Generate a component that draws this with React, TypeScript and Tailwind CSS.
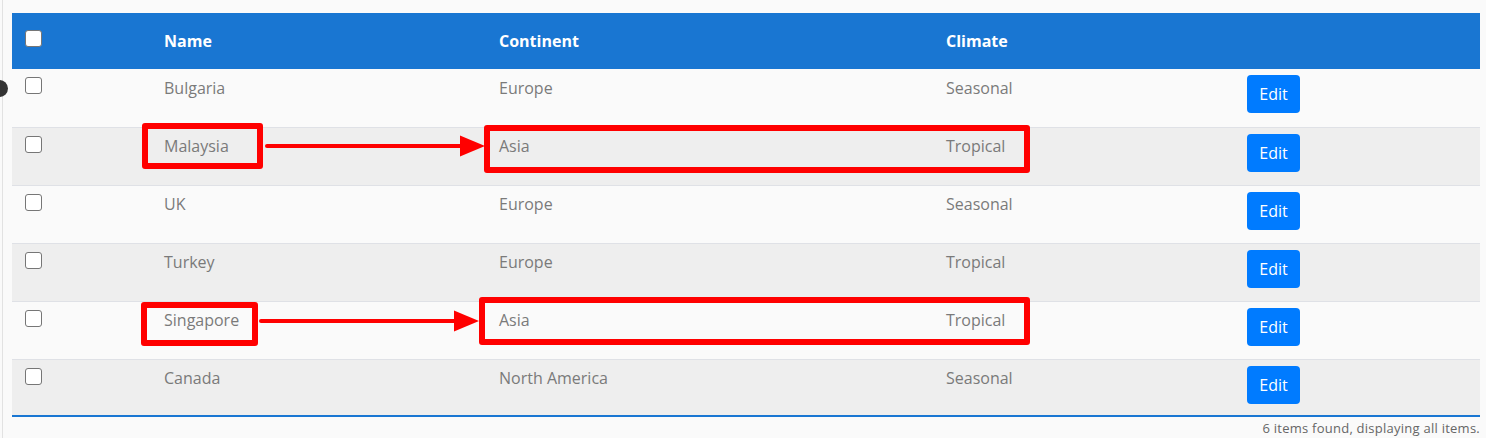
import React from "react";

interface Country {
  name: string;
  continent: string;
  climate: string;
}

const countries: Country[] = [
  { name: "Bulgaria", continent: "Europe", climate: "Seasonal" },
  { name: "Malaysia", continent: "Asia", climate: "Tropical" },
  { name: "UK", continent: "Europe", climate: "Seasonal" },
  { name: "Turkey", continent: "Europe", climate: "Tropical" },
  { name: "Singapore", continent: "Asia", climate: "Tropical" },
  { name: "Canada", continent: "North America", climate: "Seasonal" },
];

const Checkbox = () => (
  <span className="block h-[17px] w-[17px] rounded-[3px] border-[1.5px] border-[#767676] bg-white" />
);

const Arrow = ({ left, top, width }: { left: number; top: number; width: number }) => (
  <svg
    className="absolute"
    style={{ left, top: top - 12 }}
    width={width}
    height={24}
    viewBox={`0 0 ${width} 24`}
  >
    <line x1={2} y1={12} x2={width - 22} y2={12} stroke="#ff0000" strokeWidth={4} strokeLinecap="round" />
    <polygon points={`${width - 25},1.5 ${width},12 ${width - 25},22.5`} fill="#ff0000" />
  </svg>
);

const Box = ({ left, top, width, height }: { left: number; top: number; width: number; height: number }) => (
  <div
    className="absolute rounded-[3px] border-[6px] border-[#ff0000]"
    style={{ left, top, width, height }}
  />
);

export default function App() {
  return (
    <div className="relative min-h-[438px] bg-[#fafafa] pl-[2px] [font-family:'Open_Sans',sans-serif]">
      <div className="absolute left-[-9px] top-[80px] h-[17px] w-[17px] rounded-full bg-[#333]" />
      <div className="min-h-[438px] border-l border-[#e2e2e2] pl-[9px] pr-[6px] pt-[13px]">
        <div className="relative">
          <table className="w-full table-fixed border-collapse text-[16px]">
            <colgroup>
              <col className="w-[140px]" />
              <col className="w-[335px]" />
              <col className="w-[447px]" />
              <col className="w-[301px]" />
              <col />
            </colgroup>
            <thead>
              <tr className="h-[56px] bg-[#1976d2] text-left text-white">
                <th className="px-[13px] pb-[5px] align-middle">
                  <Checkbox />
                </th>
                <th className="px-3 font-bold">Name</th>
                <th className="px-3 font-bold">Continent</th>
                <th className="px-3 font-bold">Climate</th>
                <th />
              </tr>
            </thead>
            <tbody className="text-[#7a7a7a]">
              {countries.map((c, i) => (
                <tr
                  key={c.name}
                  className={`${i === countries.length - 1 ? "h-[56px]" : "h-[58px]"} ${i === 0 ? "" : "border-t border-[#dfe1e6]"} ${i % 2 === 1 ? "bg-[#eeeeee]" : "bg-[#fafafa]"}`}
                >
                  <td className="px-[13px] pt-[8px] align-top">
                    <Checkbox />
                  </td>
                  <td className="px-3 pt-[6.5px] align-top leading-6">{c.name}</td>
                  <td className="px-3 pt-[6.5px] align-top leading-6">{c.continent}</td>
                  <td className="px-3 pt-[6.5px] align-top leading-6">{c.climate}</td>
                  <td className="px-3 pt-[6px] align-top">
                    <button className="h-[38px] w-[53px] rounded-[4px] bg-[#007bff] text-[16px] text-white">
                      Edit
                    </button>
                  </td>
                </tr>
              ))}
            </tbody>
          </table>
          <div className="h-[2px] bg-[#1976d2]" />
          <p className="mt-[3px] text-right text-[13px] leading-4 tracking-[0.25px] text-[#666]">
            6 items found, displaying all items.
          </p>

          <Box left={130} top={110} width={121} height={46} />
          <Arrow left={253} top={133} width={220} />
          <Box left={472} top={112} width={546} height={48} />

          <Box left={129} top={289} width={117} height={44} />
          <Arrow left={247} top={308} width={220} />
          <Box left={467} top={284} width={551} height={48} />
        </div>
      </div>
    </div>
  );
}
